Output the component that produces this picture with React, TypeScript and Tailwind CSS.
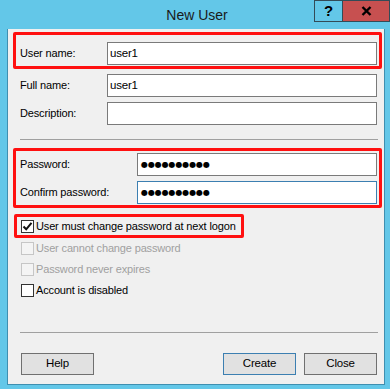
import React from "react";

const font = { fontFamily: '"Liberation Sans", Arial, sans-serif' };

function Input({ value, password, focused, w }: { value?: string; password?: boolean; focused?: boolean; w: string }) {
  return (
    <div
      className={`${w} h-[23px] bg-white border ${focused ? "border-[#3c7fb1]" : "border-[#7a7a7a]"} flex items-center pl-[2px] text-[11.5px] tracking-[-0.2px] text-black`}
    >
      {password ? (
        <span className="text-[8px] tracking-[-0.1px] leading-none pl-[1px]" style={{ fontFamily: '"DejaVu Sans", sans-serif' }}>
          ●●●●●●●●●●
        </span>
      ) : (
        value
      )}
    </div>
  );
}

function Check({ checked, disabled }: { checked?: boolean; disabled?: boolean }) {
  return (
    <div
      className={`w-[13px] h-[13px] border shrink-0 flex items-center justify-center ${
        disabled ? "border-[#c6c6c6] bg-[#f4f4f4]" : "border-[#333333] bg-white"
      }`}
    >
      {checked && (
        <svg width="11" height="11" viewBox="0 0 11 11">
          <path d="M1.5 5.5 L4.2 8.3 L9.5 1.8" fill="none" stroke="#111" strokeWidth="2" />
        </svg>
      )}
    </div>
  );
}

function Btn({ label, primary }: { label: string; primary?: boolean }) {
  return (
    <div
      className={`w-[73px] h-[22px] bg-[#e1e1e1] border ${primary ? "border-[#3c7fb1]" : "border-[#707070]"} flex items-center justify-center text-[11.5px] tracking-[-0.2px] text-black`}
    >
      {label}
    </div>
  );
}

export default function App() {
  return (
    <div className="w-[390px] h-[389px] bg-[#63c7e8] flex flex-col overflow-hidden" style={font}>
      {/* Title bar */}
      <div className="h-[29px] grid grid-cols-[1fr_auto_1fr] shrink-0">
        <div />
        <div className="text-[14px] text-[#1a1a1a] pt-[5px] pl-[4px]">New User</div>
        <div className="flex justify-end items-start">
          <div className="w-[29px] h-[22px] border border-[#334b57] flex items-center justify-center text-[15px] font-bold text-black">
            ?
          </div>
          <div className="w-[47px] h-[22px] border border-l-0 border-[#334b57] bg-[#c75050] flex items-center justify-center">
            <svg width="11" height="10" viewBox="0 0 11 10">
              <path d="M1.5 1 L9.5 9 M9.5 1 L1.5 9" stroke="#000" strokeWidth="2.4" />
            </svg>
          </div>
        </div>
      </div>

      {/* Client */}
      <div className="ml-[7px] mr-[5px] h-[356px] border-l border-r border-b border-[#3f8fb0] bg-[#f0f0f0] flex flex-col pl-[12px] pr-[6px] pt-[3px] text-[11px] tracking-[-0.15px] text-black">
        {/* Username red box */}
        <div className="-ml-[7px] -mr-[4px] border-[3px] border-[#ff1010] rounded-[2px] pl-[4px] pr-[1px] pt-[7px] pb-[1px] flex items-center">
          <div className="w-[87px]">User name:</div>
          <Input value="user1" w="w-[270px]" />
        </div>

        <div className="flex items-center mt-[5px]">
          <div className="w-[87px]">Full name:</div>
          <Input value="user1" w="w-[270px]" />
        </div>
        <div className="flex items-center mt-[5px]">
          <div className="w-[87px]">Description:</div>
          <Input w="w-[270px]" />
        </div>

        <div className="h-px bg-[#a0a0a0] mt-[14px]" />

        {/* Password red box */}
        <div className="-ml-[7px] -mr-[4px] mt-[8px] border-[3px] border-[#ff1010] rounded-[2px] pl-[4px] pr-[1px] pt-[2px] pb-[1px] flex flex-col gap-[5px]">
          <div className="flex items-center">
            <div className="w-[117px]">Password:</div>
            <Input password w="w-[240px]" />
          </div>
          <div className="flex items-center">
            <div className="w-[117px]">Confirm password:</div>
            <Input password focused w="w-[240px]" />
          </div>
        </div>

        {/* Checkbox red box */}
        <div className="-ml-[6px] mt-[6px] self-start border-[3px] border-[#ff1010] rounded-[2px] h-[24px] pl-[4px] pr-[5px] flex items-center gap-[2px]">
          <Check checked />
          <span>User must change password at next logon</span>
        </div>
        <div className="h-[21px] flex items-center gap-[2px] ml-[1px] text-[#a0a0a0]">
          <Check disabled />
          <span>User cannot change password</span>
        </div>
        <div className="h-[21px] flex items-center gap-[2px] ml-[1px] text-[#a0a0a0]">
          <Check disabled />
          <span>Password never expires</span>
        </div>
        <div className="h-[21px] flex items-center gap-[2px] ml-[1px]">
          <Check />
          <span>Account is disabled</span>
        </div>

        <div className="h-px bg-[#a0a0a0] mt-[31px]" />

        <div className="flex mt-[20px] pl-[1px] pr-[1px]">
          <Btn label="Help" />
          <div className="flex-1" />
          <div className="flex gap-[8px]">
            <Btn label="Create" primary />
            <Btn label="Close" />
          </div>
        </div>
      </div>
    </div>
  );
}
